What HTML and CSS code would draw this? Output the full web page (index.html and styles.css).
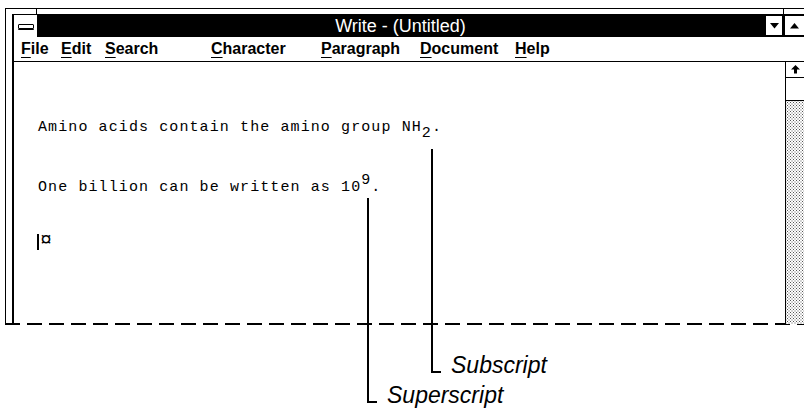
FILE: index.html
```html
<!DOCTYPE html>
<html>
<head>
    <meta charset="UTF-8">
    <title>Write - (Untitled)</title>
    <link rel="stylesheet" href="styles.css">
</head>
<body>
    <div class="stage">
        <div class="window">
            <span class="notch notch-left"></span>
            <span class="notch notch-right"></span>
            <div class="frame">
                <div class="titlebar">
                    <div class="sysmenu"><span class="sysbar"></span></div>
                    <div class="caption">Write - (Untitled)</div>
                    <div class="sizebtn">
                        <svg width="9" height="6" viewBox="0 0 9 6"><polygon points="0,0 9,0 4.5,5.5" fill="#000"/></svg>
                    </div>
                    <div class="sizebtn last">
                        <svg width="9" height="6" viewBox="0 0 9 6"><polygon points="0,5.5 9,5.5 4.5,0" fill="#000"/></svg>
                    </div>
                </div>

                <div class="menubar">
                    <span><u>F</u>ile</span>
                    <span><u>E</u>dit</span>
                    <span><u>S</u>earch</span>
                    <span><u>C</u>haracter</span>
                    <span><u>P</u>aragraph</span>
                    <span><u>D</u>ocument</span>
                    <span><u>H</u>elp</span>
                </div>

                <div class="client">
                    <div class="doc">
                        <p class="para">Amino acids contain the amino group NH<sub>2</sub>.</p>
                        <p class="para">One billion can be written as 10<sup>9</sup>.</p>
                        <p class="para caretline"><span class="caret"></span><span class="endmark">¤</span></p>
                    </div>
                    <div class="vscroll">
                        <div class="arrowbox">
                            <svg width="9" height="9" viewBox="0 0 9 9"><polygon points="4.5,0 9,4.5 6,4.5 6,8.5 3,8.5 3,4.5 0,4.5" fill="#000"/></svg>
                        </div>
                        <div class="thumb"></div>
                        <div class="track"></div>
                    </div>
                </div>
            </div>
        </div>
        <div class="cutline"></div>

        <!-- callouts -->
        <div class="callout sub-callout">
            <div class="leader"></div>
            <span class="label">Subscript</span>
        </div>
        <div class="callout sup-callout">
            <div class="leader"></div>
            <span class="label">Superscript</span>
        </div>
    </div>
</body>
</html>
```

FILE: styles.css
```css
body {
    margin: 0;
    background: #fff;
    color: #000;
    font-family: "Liberation Sans", Arial, Helvetica, sans-serif;
}

.stage {
    position: relative;
    width: 804px;
    height: 410px;
    overflow: hidden;
}

/* Window frame */
.window {
    position: relative;
    margin: 8px 0 0 5px;
    height: 309px;
    border-top: 1px solid #000;
    border-left: 1px solid #000;
    padding: 5px 0 0 6px;
}

/* resize-corner marks on the frame */
.notch {
    position: absolute;
    top: 0;
    width: 1px;
    height: 5px;
    background: #000;
}

.notch-left {
    left: 30px;
}

.notch-right {
    left: 777px;
}

.frame {
    height: 100%;
    border-top: 1px solid #000;
    border-left: 2px solid #000;
    display: flex;
    flex-direction: column;
}

/* Title bar */
.titlebar {
    display: flex;
    height: 22px;
    background: #000;
}

.sysmenu {
    width: 23px;
    background: #fff;
    border-right: 1px solid #000;
    display: flex;
    align-items: center;
    justify-content: center;
}

.sysbar {
    width: 14px;
    height: 3px;
    border: 1px solid #000;
    border-radius: 1px;
    box-shadow: 0 1px 0 #000;
}

.caption {
    flex: 1;
    color: #fff;
    text-align: center;
    font-size: 18px;
    line-height: 22px;
}

.sizebtn {
    width: 16px;
    height: 19px;
    margin: 1px 0 0 3px;
    background: #fff;
    display: flex;
    align-items: center;
    justify-content: center;
}

.sizebtn.last {
    width: 19px;
}

/* Menu bar */
.menubar {
    display: grid;
    grid-template-columns: 40px 44px 106px 110px 99px 95px auto;
    height: 24px;
    padding-left: 7px;
    border-bottom: 1px solid #000;
    font-size: 16px;
    font-weight: bold;
    line-height: 24px;
}

.menubar u {
    text-decoration-thickness: 1px;
    text-underline-offset: 3px;
}

/* Client area */
.client {
    flex: 1;
    display: flex;
}

.doc {
    flex: 1;
    padding: 56px 0 0 24px;
    font-family: "Liberation Mono", "Courier New", monospace;
    font-size: 15px;
    letter-spacing: 1.1px;
}

.para {
    margin: 0;
    height: 20px;
    line-height: 20px;
}

.para + .para {
    margin-top: 40px;
}

.para.caretline {
    margin-top: 32px;
    display: flex;
    align-items: flex-end;
}

sub, sup {
    font-size: 15px;
    line-height: 0;
}

sub {
    vertical-align: -6px;
}

sup {
    vertical-align: 7px;
}

.caret {
    width: 2px;
    height: 16px;
    background: #000;
    margin: 0 1px 0 -1px;
}

.endmark {
    font-size: 20px;
    line-height: 16px;
    margin-bottom: 1px;
}

/* Vertical scroll bar */
.vscroll {
    width: 18px;
    border-left: 1px solid #000;
    display: flex;
    flex-direction: column;
}

.arrowbox {
    height: 15px;
    border-bottom: 1px solid #000;
    display: flex;
    align-items: center;
    justify-content: center;
}

.thumb {
    height: 22px;
    border-bottom: 1px solid #000;
}

.track {
    flex: 1;
    background-color: #fff;
    background-image:
        radial-gradient(circle, #555 0.7px, transparent 1px),
        radial-gradient(circle, #555 0.7px, transparent 1px);
    background-size: 3px 3px;
    background-position: 0 0, 1.5px 1.5px;
}

/* Torn-off bottom edge */
.cutline {
    margin-left: 5px;
    height: 2px;
    background: repeating-linear-gradient(to right, #000 0 15px, transparent 15px 22px);
}

/* Callouts */
.callout {
    position: absolute;
    display: flex;
    align-items: flex-end;
}

.leader {
    width: 8px;
    border-left: 2px solid #000;
    border-bottom: 2px solid #000;
}

.label {
    margin: 0 0 -6px 10px;
    font-size: 23px;
    font-style: italic;
    line-height: 28px;
}

.sub-callout {
    left: 431px;
    top: 149px;
}

.sub-callout .leader {
    height: 222px;
}

.sup-callout {
    left: 367px;
    top: 198px;
}

.sup-callout .leader {
    height: 203px;
}
```
